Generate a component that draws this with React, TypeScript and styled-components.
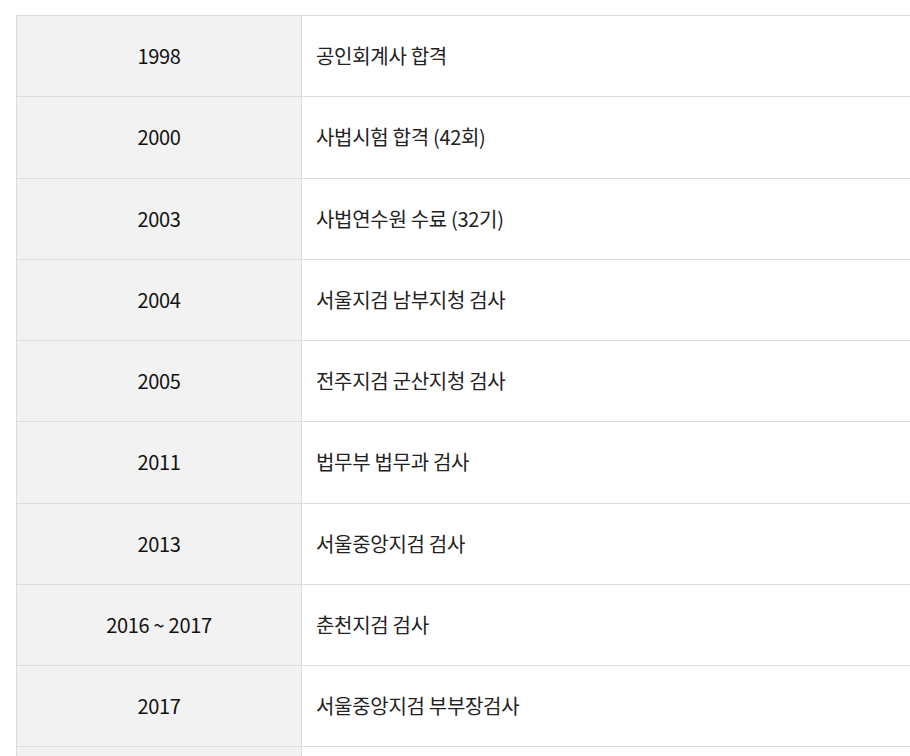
import React from "react";
import styled, { createGlobalStyle } from "styled-components";

const GlobalStyle = createGlobalStyle`
  html, body {
    margin: 0;
    padding: 0;
    background: #ffffff;
    overflow: hidden;
  }
  body {
    font-family: "Noto Sans CJK KR", "Noto Sans", sans-serif;
  }
`;

const Page = styled.div`
  padding: 15px 0 0 16px;
`;

const Table = styled.div`
  display: grid;
  grid-template-columns: 285px 1fr;
  border-top: 1px solid #dcdcdc;
  border-left: 1px solid #dcdcdc;
`;

const YearCell = styled.div`
  height: 81.25px;
  box-sizing: border-box;
  display: flex;
  align-items: center;
  justify-content: center;
  background: #f2f2f2;
  border-right: 1px solid #dcdcdc;
  border-bottom: 1px solid #dcdcdc;
  font-size: 20px;
  color: #111;
  letter-spacing: -0.3px;
  padding-bottom: 1px;
`;

const DescCell = styled.div`
  height: 81.25px;
  box-sizing: border-box;
  display: flex;
  align-items: center;
  padding: 0 0 1px 14px;
  border-bottom: 1px solid #dcdcdc;
  font-size: 20px;
  color: #222;
  letter-spacing: -0.3px;
`;

const rows: [string, string][] = [
  ["1998", "공인회계사 합격"],
  ["2000", "사법시험 합격 (42회)"],
  ["2003", "사법연수원 수료 (32기)"],
  ["2004", "서울지검 남부지청 검사"],
  ["2005", "전주지검 군산지청 검사"],
  ["2011", "법무부 법무과 검사"],
  ["2013", "서울중앙지검 검사"],
  ["2016 ~ 2017", "춘천지검 검사"],
  ["2017", "서울중앙지검 부부장검사"],
  ["", ""],
];

export default function App() {
  return (
    <>
      <GlobalStyle />
      <Page>
        <Table>
          {rows.map(([year, desc], i) => (
            <React.Fragment key={i}>
              <YearCell>{year}</YearCell>
              <DescCell>{desc}</DescCell>
            </React.Fragment>
          ))}
        </Table>
      </Page>
    </>
  );
}
